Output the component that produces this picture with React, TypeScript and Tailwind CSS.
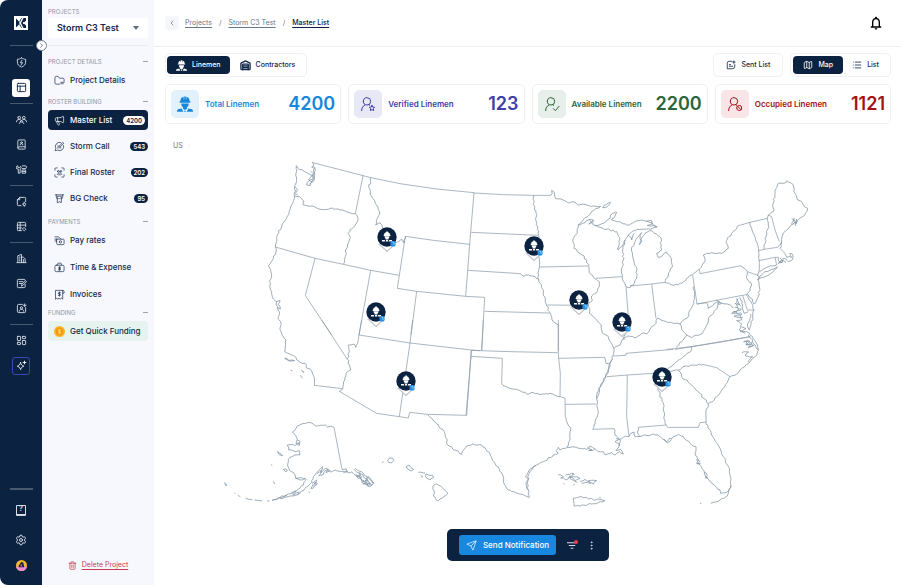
import type { ReactNode } from "react";
import {
  BookUser, ChevronLeft, ChevronRight, EllipsisVertical, LayoutDashboard, List, Map as MapIcon, Megaphone,
  PanelsTopLeft, Send, Settings, Trash2, Warehouse,
} from "lucide-react";
import { MdNotificationsNone } from "react-icons/md";

type IconProps = { className?: string; strokeWidth?: number };
type Icon = (props: IconProps) => ReactNode;

/* A 24-unit outline icon made from one path. */
function outline(d: string): Icon {
  return function Outline({ className, strokeWidth = 1.5 }: IconProps) {
    return (
      <svg viewBox="0 0 24 24" fill="none" stroke="currentColor" strokeWidth={strokeWidth} strokeLinecap="round" strokeLinejoin="round" className={className} aria-hidden="true">
        <path d={d} />
      </svg>
    );
  };
}

const ShieldBolt = outline("M12 2c3 2 5.500 3 9 3v6c0 5.500-3.500 9-9 11-5.500-2-9-5.500-9-11V5c3.500 0 6-1 9-3zM13 7l-3.500 5.500h5L11 17.500");
const Crew = outline("M4 8a3 3 0 1 0 6 0 3 3 0 1 0-6 0M14 8a3 3 0 1 0 6 0 3 3 0 1 0-6 0M1 17c0-3 2-5 6-5 2 0 4 1 5 2.500 1-1.500 3-2.500 5-2.500 4 0 6 2 6 5M9 17a3 2.500 0 1 1 6 0M7 21c0-2 2-3.500 5-3.500s5 1.500 5 3.500");
const Tools = outline("M3 4a3.500 3.500 0 0 0 2 7v9h4v-9a3.500 3.500 0 0 0 1-6L8 8H5zM14 4h6a2 2 0 0 1 0 6h-6M14 13h7v7h-7zM14 16.500h7");
const FileGear = outline("M11 21H5a2 2 0 0 1-2-2V8l5-5h11a2 2 0 0 1 2 2v7M8 3v5H3M15 18a3 3 0 1 0 6 0 3 3 0 1 0-6 0M18 13.500v1.500M18 21v1.500");
const TableGear = outline("M12 21H5a2 2 0 0 1-2-2V5a2 2 0 0 1 2-2h14a2 2 0 0 1 2 2v7M3 9h18M3 15h9M9 3v18M18 14.500l3.500 3.500-3.500 3.500-3.500-3.500z");
const Building = outline("M2 21h20M4 21V6l8-3v18M12 9h4l4 4v8M7 9h2M7 13h2M7 17h2M16 14v7");
const NoteEdit = outline("M20 14v5a2 2 0 0 1-2 2H5a2 2 0 0 1-2-2V5a2 2 0 0 1 2-2h13a2 2 0 0 1 2 2M7 8h8M7 12h5M12 17l1-4 8-7 2 2-8 8z");
const ProfilePlus = outline("M14 3H6a3 3 0 0 0-3 3v12a3 3 0 0 0 3 3h12a3 3 0 0 0 3-3v-8M19 2v6M16 5h6M9.500 10.500a2.500 2.500 0 1 0 5 0 2.500 2.500 0 1 0-5 0M7 18c0-3 2-4 5-4s5 1 5 4");
const Spark = outline("M10 6c1 4 3 6 7 7.500-4 1.500-6 3.500-7 7.500-1-4-3-6-7-7.500C7 12 9 10 10 6zM18.500 2.500v6M15.500 5.500h6");
const FolderCheck = outline("M12 20H5a3 3 0 0 1-3-3V6a3 3 0 0 1 3-3h4l3 4h7a3 3 0 0 1 3 3v4M15 16h7M15 19h5");
const ChatEdit = outline("M15 3.500A9 9 0 0 0 4 16l-1.500 5L8 20a9 9 0 0 0 13-10M8 15h7M8 11h3M12 11l7-8 2.500 2-7 7z");
const ChatPlus = outline("M14 3H8a5 5 0 0 0-5 5v13h12a6 6 0 0 0 6-6v-4M19 2v6M16 5h6M8 11h3M8 15h8");
const ScanCrew = outline("M2 7V4a2 2 0 0 1 2-2h3M17 2h3a2 2 0 0 1 2 2v3M22 17v3a2 2 0 0 1-2 2h-3M7 22H4a2 2 0 0 1-2-2v-3M7.500 9.500a2 2 0 1 0 4 0 2 2 0 1 0-4 0M13 9.500a2 2 0 1 0 4 0 2 2 0 1 0-4 0M7 16c0-4 10-4 10 0M10 17h4");
const BadgeCheck = outline("M3 4h18M5 4v5a4 4 0 0 0 3 4M19 4v5a4 4 0 0 1-3 4M8 7h8v14l-4-2-4 2zM10.500 12l1.200 1.200 2-2.200");
const Pay = outline("M6 9h14a2 2 0 0 1 2 2v8a2 2 0 0 1-2 2H8a2 2 0 0 1-2-2zM2 4h8l5 5M2 9h5M2 13h4M11.500 15a2.500 2.500 0 1 0 5 0 2.500 2.500 0 1 0-5 0");
const ExpenseCase = outline("M5 7h14a3 3 0 0 1 3 3v8a3 3 0 0 1-3 3H5a3 3 0 0 1-3-3v-8a3 3 0 0 1 3-3zM8 7V4a1.500 1.500 0 0 1 1.500-1.500h5A1.500 1.500 0 0 1 16 4v3M14.500 11.500h-4v2.500h3.500v3H9.500M12 10v8.500");
const Invoice = outline("M4 3h15v19l-3-2-2.500 2-2.500-2-2.500 2L6 20l-2 2zM19 3a2.500 2.500 0 0 1 3 2.500V9h-3M14 8h-4v3h3.500v3H9.500M12 6.500v9");

function Coin({ className }: IconProps) {
  return (
    <svg viewBox="0 0 24 24" className={className} aria-hidden="true">
      <circle cx="12" cy="12" r="12" fill="#fcb527" />
      <circle cx="12" cy="12" r="8.500" fill="#f49a10" />
      <path d="M15 8.500h-5V12h4.500v3.500H9M12 6.500v11" fill="none" stroke="#fdd267" strokeWidth="2" />
    </svg>
  );
}

const hardHat = "M4 8h1c0-3.500 2-6 5-6.800V5h.8V.8h2.400V5h.8V1.200C17 2 19 4.500 19 8h1v2H4z";
const faceAndChest = "M6.500 11.200h11v1.300c0 2-1 3.600-2.500 4.500V19l-3 2-3-2v-2c-1.500-.9-2.500-2.500-2.500-4.500z";
const shoulders = "M0 23.500C0 21 1 20 3 19.600l4-.8 2.500 4.700zM24 23.500c0-2.500-1-3.500-3-3.900l-4-.8-2.500 4.700zM10.800 22h2.400v1.500h-2.400z";

function Lineman({ className }: IconProps) {
  return (
    <svg viewBox="0 0 24 24" fill="currentColor" className={className} aria-hidden="true">
      <path d={hardHat} />
      <path d={faceAndChest} />
      <path d={shoulders} />
    </svg>
  );
}

function Logo() {
  return (
    <svg viewBox="0 0 14 14" className="size-3.5" role="img" aria-label="Home">
      <path fill="#fff" d="M0 0h14v14H0z" />
      <path fill="#0b2240" d="M2 2.500 5 5.500v3l-3 3zM7.500 2H12v2.500L9.500 7 12 9.500V12H7.500L5.500 9V5z" />
      <path fill="#fff" d="M8 2h1.500L7 7l2.500 5H8L5.500 7z" />
      <circle cx="9.800" cy="7" r=".9" fill="#fff" />
    </svg>
  );
}

const railGroups: { label: string; icon: Icon; look?: "active" | "ai" }[][] = [
  [{ label: "Safety", icon: ShieldBolt }, { label: "Projects", icon: PanelsTopLeft, look: "active" }],
  [{ label: "Crews", icon: Crew }, { label: "Contacts", icon: BookUser }, { label: "Equipment", icon: Tools }],
  [{ label: "Files", icon: FileGear }, { label: "Tables", icon: TableGear }],
  [{ label: "Companies", icon: Building }, { label: "Notes", icon: NoteEdit }, { label: "Profiles", icon: ProfilePlus }],
  [{ label: "Dashboards", icon: LayoutDashboard }, { label: "Assistant", icon: Spark, look: "ai" }],
];

function Rail() {
  return (
    <nav aria-label="Main" className="relative flex w-[42px] shrink-0 flex-col items-center rounded-l-lg bg-[#0b2240] pt-4 text-[#d5dce6]">
      <Logo />
      <div className="mt-[15px] mb-1 h-px w-[23px] bg-[#48596f]" />
      {railGroups.map((group, i) => (
        <div key={i} className="flex flex-col items-center">
          {i > 0 && <div className="my-[3px] h-px w-[23px] bg-[#48596f]" />}
          {group.map(({ label, icon: Glyph, look }) => (
            <button key={label} aria-label={label} className="flex h-[25px] w-[42px] items-center justify-center">
              <span
                className={
                  look === "active"
                    ? "flex size-[18px] items-center justify-center rounded-[3px] bg-white text-[#0b2240]"
                    : look === "ai"
                      ? "flex size-[18px] items-center justify-center rounded-[3px] border border-[#3949b5] text-white"
                      : "flex size-[18px] items-center justify-center"
                }
              >
                <Glyph className="size-[11px]" strokeWidth={2} />
              </span>
            </button>
          ))}
        </div>
      ))}
      <div className="mt-auto mb-2 h-0.5 w-[23px] bg-[#48596f]" />
      <button aria-label="Help" className="flex h-6 items-center">
        <span className="flex h-[11px] w-[10px] items-center justify-center rounded-[1px] border border-b-2 border-current text-[7px] font-bold">?</span>
      </button>
      <button aria-label="Settings" className="flex h-9 items-center"><Settings className="size-3" /></button>
      <button aria-label="Account" className="mt-0.5 mb-3.5 flex size-[11px] items-center justify-center overflow-hidden rounded-full">
        <svg viewBox="0 0 12 12" className="size-full" aria-hidden="true">
          <path fill="#fbb42c" d="M0 0h12v12H0z" />
          <path fill="#f08bd6" d="M0 7h12v5H0z" />
          <path fill="#142647" d="M3 8V6l3-4 2 1 1 5z" />
          <path fill="#e97b50" d="M5 5h1.500v2H5z" />
        </svg>
      </button>
      <button aria-label="Expand menu" className="absolute top-10 -right-[5px] flex size-[11px] items-center justify-center rounded-full border border-[#6f7c8d] bg-white text-[#0b2240]">
        <ChevronRight className="size-[7px]" />
      </button>
    </nav>
  );
}

const menu: { title: string; spacing: string; gap: string; items: { label: string; icon: Icon; count?: string; look?: "active" | "funding" }[] }[] = [
  { title: "PROJECT DETAILS", spacing: "pt-[9px]", gap: "gap-1.5", items: [{ label: "Project Details", icon: FolderCheck }] },
  {
    title: "ROSTER BUILDING",
    spacing: "pt-[5px]",
    gap: "gap-1.5",
    items: [
      { label: "Master List", icon: Megaphone, count: "4200", look: "active" },
      { label: "Storm Call", icon: ChatEdit, count: "543" },
      { label: "Final Roster", icon: ScanCrew, count: "202" },
      { label: "BG Check", icon: BadgeCheck, count: "95" },
    ],
  },
  {
    title: "PAYMENTS",
    spacing: "pt-[7px]",
    gap: "gap-[7px]",
    items: [
      { label: "Pay rates", icon: Pay },
      { label: "Time & Expense", icon: ExpenseCase },
      { label: "Invoices", icon: Invoice },
    ],
  },
  { title: "FUNDING", spacing: "pt-0.5", gap: "gap-1.5", items: [{ label: "Get Quick Funding", icon: Coin, look: "funding" }] },
];

function ProjectPanel() {
  return (
    <aside className="flex w-28 shrink-0 flex-col bg-[#f7f8fd] px-1.5 pt-1.5 pb-3">
      <label htmlFor="project" className="block text-[6px] leading-3 text-[#8d96a3]">PROJECTS</label>
      <div className="relative flex">
        <select id="project" className="h-5 w-full appearance-none rounded-[4px] bg-white pl-[9px] text-[9px] font-semibold text-[#14294a]">
          <option>Storm C3 Test</option>
        </select>
        <svg viewBox="0 0 6 4" className="pointer-events-none absolute top-2 right-[9px] h-1 w-1.5" aria-hidden="true"><path fill="#5d7183" d="M0 0h6L3 4z" /></svg>
      </div>
      <div className="mt-[7px] h-px bg-[#e9ecf2]" />
      {menu.map(({ title, spacing, gap, items }) => (
        <section key={title} className={spacing}>
          <h2 className="flex h-3 items-center justify-between text-[6px] text-[#8d96a3]">
            {title}
            <span className="h-px w-[5px] bg-[#9aa3b0]" />
          </h2>
          <ul className={`mt-[3px] flex flex-col ${gap}`}>
            {items.map(({ label, icon: Glyph, count, look }) => (
              <li key={label}>
                <a
                  href="#"
                  className={
                    look === "active"
                      ? "flex h-5 items-center gap-[5px] rounded-[4px] bg-[#0b2240] pr-[3px] pl-1.5 text-[8px] font-medium text-white"
                      : look === "funding"
                        ? "flex h-5 items-center gap-[5px] rounded-[4px] bg-[#e6f3ef] pl-1.5 text-[8px] font-medium text-[#14294a]"
                        : "flex h-5 items-center gap-[5px] pl-1.5 text-[8px] font-medium text-[#14294a]"
                  }
                >
                  <Glyph className="size-[11px] shrink-0" strokeWidth={1.5} />
                  <span className="whitespace-nowrap">{label}</span>
                  {count && (
                    <span
                      className={
                        look === "active"
                          ? "ml-auto rounded-full bg-white px-[3px] text-[6px] leading-[9px] font-semibold text-[#0b2240]"
                          : "ml-auto rounded-full bg-[#0b2240] px-[3px] text-[6px] leading-[9px] font-semibold text-white"
                      }
                    >
                      {count}
                    </span>
                  )}
                </a>
              </li>
            ))}
          </ul>
        </section>
      ))}
      <button className="mt-auto flex items-center justify-center gap-[5px] text-[7px] leading-4 text-[#c9394f]">
        <Trash2 className="size-[9px]" />
        <span className="underline underline-offset-2">Delete Project</span>
      </button>
    </aside>
  );
}

const person = "M5 8a5.500 5.500 0 1 0 11 0 5.500 5.500 0 1 0-11 0M2.500 22c0-4 1.500-7 5-8.700M13 13.200l1.500.8";
const PersonStar = outline(`${person}M18 14l1.200 2.600 2.800.4-2 2 .5 2.800-2.500-1.300-2.500 1.300.5-2.800-2-2 2.800-.4z`);
const PersonCheck = outline(`${person}M14 19l3 3 5.500-6.500`);
const PersonBlocked = outline(`${person}M14.500 18a3.800 3.800 0 1 0 7.600 0 3.800 3.800 0 1 0-7.600 0M16 15.500l5 5`);

const stats: { label: string; value: string; text: string; tile: string; icon: Icon }[] = [
  { label: "Total Linemen", value: "4200", text: "text-[#1787dc]", tile: "bg-[#e3f1fd]", icon: Lineman },
  { label: "Verified Linemen", value: "123", text: "text-[#403ea8]", tile: "bg-[#e8e8f7]", icon: PersonStar },
  { label: "Available Linemen", value: "2200", text: "text-[#2a6638]", tile: "bg-[#e7efea]", icon: PersonCheck },
  { label: "Occupied Linemen", value: "1121", text: "text-[#a31217]", tile: "bg-[#f8e5e7]", icon: PersonBlocked },
];

/* Each sheet holds lines in thirds of a map unit, from its own corner.
   "straight" are surveyed borders, "natural" are coasts and rivers. */
const sheets = [
  {
    x: 260, y: 155,
    straight: [
      "163 24 309 62 333 68 420 86 530 102 642 113 629 268 617 424", "46 276 165 310 250 328 332 346 418 361",
      "309 62 286 176", "165 310 136 422 215 540", "332 346 297 540", "436 244 412 400 470 409 617 424", "436 244 520 256 629 268", "470 409 453 540",
    ],
    natural: [
      "109 32 118 44 130 48 142 54 157 60 160 72 150 92 140 90 148 76 158 72 164 60 160 48 163 40 155 36 162 30 157 22 163 24",
      "152 48 160 56 153 66 146 72 156 80 148 88", "160 34 166 46 160 62 164 72 156 82",
      "109 32 107 60 110 80 104 95 107 108 103 122 95 150 80 190 65 215 52 240 50 260 46 276",
      "105 95 112 104 105 116 113 120", "103 122 118 124 130 136 130 150 145 154 165 156 180 163 210 160 240 165 262 171 286 176 294 190 285 212 264 236 271 248 262 270 250 328",
      "46 276 48 290 40 310 25 332 35 360 28 380 35 410 40 432 50 440 48 450 58 470 54 490 62 500 60 520 66 540",
      "50 440 60 436 54 448 61 462 52 458", "333 68 327 98 335 125 346 145 359 170 352 190 347 210 360 204 368 218 380 245 400 262 415 260 425 252 432 264 436 244",
    ],
  },
  {
    x: 460, y: 170,
    straight: [
      "42 69 130 74 222 76 273 76", "34 187 235 196", "24 301 182 311", "74 424 268 429", "17 379 74 382 65 542", "262 405 385 406",
      "239 291 384 288", "408 325 486 320", "510 348 575 342 615 337", "498 350 504 430", "575 342 588 445", "295 462 295 542",
    ],
    natural: [
      "273 76 275 61 283 67 287 86 310 90 322 97 345 96 355 105 375 103 395 110 422 109 400 122 375 143 355 164",
      "222 76 221 100 228 130 230 160 236 196 238 210 236 240 239 290 234 310 236 328 245 345 250 370 258 400 268 425 275 440 280 455 294 464",
      "182 311 192 319 205 315 225 320 236 328", "355 164 352 190 340 205 342 235 360 250 380 270 386 290 388 308 400 322 418 335 418 350 410 368 395 378 397 390 385 405 388 430 410 450 424 465 428 490 445 500 455 520 462 535",
      "355 164 375 158 390 148 400 150 398 163 404 166 430 160 450 145 458 130 470 127 465 140 455 150 475 155 500 165 520 158 545 150 560 155 575 152 580 165 590 172 570 178 545 178 520 182 505 195 495 210 488 240 490 270 484 300 488 330 498 350 510 353 520 345 530 320 528 290 518 260 514 240 525 215 535 200 545 188",
      "388 150 396 158 386 162 400 152", "404 166 440 178 470 185 480 205 478 220 474 240 485 230 495 210", "560 150 578 160 562 166 592 170", "505 195 515 210 522 190",
      "545 188 540 205 545 215 538 224 544 205 555 190 575 182 600 200 604 225 605 240 590 250 595 262 608 255 620 246 632 262 638 290 625 315 615 335",
      "428 113 440 103 452 98 445 107 432 113 428 113", "504 430 500 470 492 510",
      "462 535 480 525 490 505 505 498 530 502 545 490 560 492 575 470 588 460 592 445",
    ],
  },
  {
    x: 640, y: 170,
    straight: [
      "158 316 171 402 318 374", "178 298 180 311 303 287", "322 305 354 316", "358 270 358 300 352 318", "292 168 330 157 382 145",
      "385 135 395 140 405 180 418 215", "356 242 372 238 412 232", "356 272 405 262 415 262", "405 262 410 285", "308 376 322 420 342 420",
      "171 402 202 398", "105 538 155 530 250 515 330 500",
    ],
    natural: [
      "52 445 70 452 85 458 105 460 120 462 130 450 145 440 150 420 162 400 163 378 160 350",
      "75 337 100 346 125 340 140 325 158 314 178 298 195 275 190 255 215 247 245 250 265 235 258 215 275 190 292 168",
      "382 145 385 135 400 125 400 100 405 70 415 40 430 40 440 32 458 42 465 70 472 90 485 95 490 105 503 115 495 135 475 150 468 162 462 145 455 165 440 180 428 195 425 215 412 232",
      "455 145 464 158 458 164 470 148 466 168", "303 287 322 305 320 325 335 345 330 362 318 374", "330 157 340 190 352 220 356 242 358 270", "382 145 385 165 378 200 372 238",
      "425 215 420 235 430 245 440 262 455 262 450 250 457 252 458 268 445 275 430 265 425 278 415 272 415 262", "420 264 428 276 414 280 424 270 438 278",
      "358 306 380 292 410 285", "352 330 370 310 395 298 412 290 400 305 375 320 352 330", "354 316 358 350 355 380 342 402 338 388 322 372",
      "318 374 335 400 342 420 338 445 328 480 322 465 330 445 332 432", "290 385 298 405 285 400 295 420 275 430 300 435 305 450 290 452 305 462 298 480 320 485 328 490 345 512 355 540",
      "300 382 308 405 312 430 325 425", "284 412 304 418 280 426 306 432 282 438 308 442", "294 386 290 398 302 408", "202 400 205 415 222 402 235 395 255 402 270 405 280 415", "228 390 245 400 232 402",
      "235 395 232 415 215 435 205 450 198 470 188 490 155 503 140 495 125 478 120 462", "140 495 125 515 108 532", "310 515 325 512 318 524 336 518 326 530 342 526", "304 470 318 476 300 484 316 490",
    ],
  },
  {
    x: 260, y: 320,
    straight: [
      "185 0 262 118", "297 45 450 69 634 90 660 92", "458 0 450 69 418 290", "305 0 297 45 293 70", "163 196 248 206", "238 214 350 280 418 290 445 294 449 277 502 283 620 286 634 90", "222 322 246 448",
    ],
    natural: [
      "66 45 70 50 78 60 74 95 95 105 108 112 118 125 135 130 138 142 155 152 162 170 163 196",
      "262 118 268 135 272 150 258 160 255 180 248 206 238 214", "262 118 268 95 265 75 282 72 288 82 293 70", "502 283 520 302 553 335 563 375 605 403",
      "74 115 85 120 104 122 88 123 74 115", "92 150 97 153", "124 150 132 158 127 152", "121 166 127 175",
      "222 322 190 316 170 318 150 308 125 312 108 325 97 336 112 358 108 370 120 368 118 376 100 374 82 375 86 390 108 395 120 393 120 405 105 405 90 412 85 425 84 440 95 455 105 465 108 475 125 473 138 478 130 495 110 512 85 522 60 532 36 542",
      "62 536 85 530 112 524 135 505 155 488 160 470 175 452 188 440 184 458 200 444 212 456 225 450 246 454 262 455 280 460 300 472 330 500 340 492 335 480 310 460 285 445",
      "105 474 120 480 136 474", "112 360 120 364 112 372", "170 462 184 452 176 468 190 464 196 452 206 448 198 458 212 452", "92 520 108 514 98 526 118 516 112 526",
      "282 448 300 466 290 468 312 484 304 486 326 500 316 480 334 496 320 472 342 488", "286 462 304 474 298 458 322 478 310 492 330 490", "246 448 258 446 262 456 250 458",
      "156 490 170 480 172 492 160 504 153 506 158 494", "158 498 166 486 168 496", "52 395 60 400 68 407 58 404 52 395", "70 448 82 450 78 456 70 448", "33 434 37 437", "40 484 44 492", "146 516 150 519",
      "366 429 371 425", "383 422 388 414 398 415 401 422 394 429 386 427 383 422", "438 440 447 435 453 443 461 448 453 453 443 447 438 440",
      "475 457 495 459", "482 466 488 470 484 472", "498 462 508 466 518 466 521 473 510 480 500 474 498 462", "519 498 530 492 548 504 564 520 548 534 532 543 520 528 522 512 519 498",
    ],
  },
  {
    x: 215, y: 410,
    straight: ["58 248 62 252", "68 256 76 260", "156 273 164 273"],
    natural: ["27 218 34 228 30 222", "92 264 100 268 112 269", "118 270 128 271 141 273", "172 270 186 268 200 262", "196 266 208 258 216 256"],
  },
  {
    x: 460, y: 320,
    straight: [
      "34 91 150 95 293 98", "34 91 33 109 127 115 125 191", "33 109 18 286", "70 0 65 92", "295 0 295 98 296 115 434 112", "296 115 301 160 300 230 315 234 316 290",
      "316 253 408 252", "398 328 462 326", "460 108 498 106 498 100 640 88", "440 170 502 165 580 160 620 157", "502 165 500 290 507 348", "535 322 618 315",
    ],
    natural: [
      "125 191 150 205 180 212 200 222 220 218 240 224 270 220 285 226 300 230", "316 290 332 330 330 360 322 382", "434 112 438 130 450 130",
      "462 85 460 105 450 130 440 165 425 190 410 225 412 250 415 280 405 305 398 328", "456 118 446 140 434 178 420 200 411 236",
      "462 326 465 345 478 358 490 352 507 350 512 340 522 336 525 350 540 350 532 336 535 322", "592 200 600 225 612 260 612 290 618 315", "540 350 580 342 600 350 620 365 640 350 655 343",
      "322 382 350 382 380 388 390 378 402 385 415 395 430 395 435 405 455 398 465 405 478 395 490 402 482 388 468 392 478 372 465 365 478 358", "382 380 396 390 386 392 404 388", "468 356 482 362 478 378",
      "322 382 300 390 295 382 288 392 295 400 280 405 250 425 220 440 205 465 202 490 208 532 180 522 145 510 130 485 128 465 105 430 90 400 65 375 38 372 20 378 5 403", "228 436 212 446 204 458 196 470 206 476 198 490 205 510",
      "342 558 340 535 360 530 380 532 400 540 420 538 435 542 415 548 395 552 375 556 342 558", "418 532 423 534", "295 464 310 470 302 474 318 480 330 468 345 482 360 475 350 470 326 472", "316 466 340 460 330 476 352 488",
      "360 484 375 478 392 490 385 482 410 482 400 492 382 488 364 490", "310 489 314 493", "340 496 344 492", "338 461 344 464",
    ],
  },
  {
    x: 620, y: 320,
    straight: ["140 88 155 87 215 80 390 50", "138 315 143 322 235 322 240 308 258 306", "248 133 290 143 330 170"],
    natural: [
      "215 80 212 95 190 110 165 130 148 142 140 152", "140 156 177 150 200 138 248 133", "385 45 405 75 415 90 410 105 395 118 385 130 360 150 350 162 330 170 315 200 290 230 265 252 258 275 258 306",
      "372 66 390 64 378 74 400 76 384 84", "366 98 386 96 376 108 398 110 384 126", "175 152 185 170 215 195 235 215 265 252",
      "258 306 275 345 300 385 305 400 325 440 333 480 330 505 318 518 302 520 300 510 275 490 255 465 245 440 230 430 235 420 225 405 228 380 210 370 190 350 175 343",
      "332 496 322 528 300 540 272 550", "228 418 240 424 232 432 242 430", "252 456 262 466 256 474 264 472", "132 358 142 368 155 358", "240 550 244 550",
    ],
  },
];

/* Turns a point list into a path, adding a repeatable shiver when the line is natural. */
function trace(list: string, rough: boolean) {
  const n = list.split(" ").map(Number);
  let seed = Math.abs(n[0] * 31 + n[1] * 17) + 7;
  const shake = () => {
    seed = (seed * 16807) % 2147483647;
    return ((seed % 1000) / 1000 - 0.5) * 5;
  };
  let d = `M${n[0]} ${n[1]}`;
  for (let i = 2; i < n.length; i += 2) {
    const dx = n[i] - n[i - 2];
    const dy = n[i + 1] - n[i - 1];
    const steps = rough ? Math.floor(Math.hypot(dx, dy) / 6) : 0;
    for (let s = 1; s < steps; s++) {
      d += `L${(n[i - 2] + (dx * s) / steps + shake()).toFixed(1)} ${(n[i - 1] + (dy * s) / steps + shake()).toFixed(1)}`;
    }
    d += `L${n[i]} ${n[i + 1]}`;
  }
  return d;
}

const pins = [[387, 237], [534, 246], [376, 312], [579, 300], [622, 322], [662, 377], [406, 381]];

function UsMap() {
  return (
    <svg viewBox="165 155 726 360" className="block w-full" role="img" aria-label="Linemen across the United States">
      <g fill="none" stroke="#8b9cab" strokeWidth="2.200" strokeLinejoin="round">
        {sheets.map((sheet) => (
          <g key={`${sheet.x}-${sheet.y}`} transform={`translate(${sheet.x} ${sheet.y}) scale(${1 / 3})`}>
            {sheet.straight.map((line) => <path key={line} d={trace(line, false)} />)}
            {sheet.natural.map((line) => <path key={line} d={trace(line, true)} stroke="#7b90a0" />)}
          </g>
        ))}
      </g>
      {pins.map(([x, y]) => (
        <g key={x} transform={`translate(${x} ${y})`}>
          <path d="M-8 7 0 14.500 8 7z" fill="#fff" stroke="#c4c7cb" strokeWidth="1.200" strokeLinejoin="round" />
          <circle r="9.700" fill="#0b2240" />
          <g transform="translate(-5 -5.500) scale(.42)" fill="#fff">
            <path d="M4 8h1c0-4 2.500-6 5-6.500V0h4v1.500C16.500 2 19 4 19 8h1v2.500H4z" />
            <path d="M6 11.500h12c0 2.500-1 4-2.500 5V19h-7v-2.500C7 15.500 6 14 6 11.500z" />
            <path d="M0 24v-3.500h6.500L8 24zM24 24v-3.500h-6.500L16 24zM9.500 20.500h5V24h-5z" />
          </g>
          <rect x="3.500" y="4" width="5" height="5.500" rx="1.500" fill="#2490e8" />
          <path d="M5.500 5.500h1.500v2.500" stroke="#b9defb" strokeWidth=".7" fill="none" />
        </g>
      ))}
    </svg>
  );
}

function Main() {
  return (
    <main className="flex min-w-0 flex-1 flex-col">
      <header className="flex h-[47px] items-center border-b border-[#eceef1] pr-[17px] pl-[11px]">
        <button aria-label="Back" className="flex size-3.5 items-center justify-center rounded-[3px] bg-[#f5f6fc] text-[#5c6b7d]">
          <ChevronLeft className="size-2" />
        </button>
        <nav aria-label="Breadcrumb" className="ml-1.5 flex items-center gap-[7px] text-[7px] text-[#66788a]">
          <a href="#" className="underline underline-offset-2">Projects</a>
          <span>/</span>
          <a href="#" className="underline underline-offset-2">Storm C3 Test</a>
          <span>/</span>
          <a href="#" aria-current="page" className="font-medium text-[#0b2240] underline underline-offset-2">Master List</a>
        </nav>
        <button aria-label="Alerts" className="ml-auto"><MdNotificationsNone className="size-4 text-black" /></button>
      </header>
      <div className="flex flex-1 flex-col px-[11px] pt-1.5 pr-2.5 pb-6">
        <div className="flex items-center gap-[7px] text-[7px] font-medium text-[#14294a]">
          <div className="mr-auto flex rounded-[5px] border border-[#f0f1f4] px-px py-0.5">
            <button className="flex h-[18px] items-center gap-[5px] rounded-[4px] bg-[#0b2240] px-[9px] text-white"><Lineman className="size-[11px]" />Linemen</button>
            <button className="flex h-[18px] items-center gap-[5px] px-2.5"><Warehouse className="size-[11px]" strokeWidth={3} />Contractors</button>
          </div>
          <button className="flex h-6 items-center gap-[5px] rounded-[5px] border border-[#f0f1f4] px-3"><ChatPlus className="size-2.5" strokeWidth={2} />Sent List</button>
          <div className="flex rounded-[5px] border border-[#f0f1f4] p-0.5">
            <button className="flex h-[18px] items-center gap-[5px] rounded-[4px] bg-[#0b2240] px-2.5 text-white"><MapIcon className="size-2.5" />Map</button>
            <button className="flex h-[18px] items-center gap-[5px] px-[9px]"><List className="size-2.5" />List</button>
          </div>
        </div>
        <div className="mt-[7px] grid grid-cols-4 gap-[7px]">
          {stats.map(({ label, value, text, tile, icon: Glyph }) => (
            <section key={label} className={`flex h-10 items-center rounded-[5px] border border-[#f0f1f4] px-[5px] ${text}`}>
              <span className={`flex size-7 shrink-0 items-center justify-center rounded-[5px] ${tile}`}>
                <Glyph className="size-4" strokeWidth={1.5} />
              </span>
              <h2 className="ml-1.5 text-[8px] font-semibold whitespace-nowrap">{label}</h2>
              <p className="ml-auto text-[18px] leading-6 font-semibold">{value}</p>
            </section>
          ))}
        </div>
        <nav aria-label="Map region" className="mt-4 flex h-3 items-center gap-[3px] pl-2 text-[7px] text-[#66788a]">
          <a href="#">US</a>
          <ChevronRight className="size-1.5 text-[#d5dae0]" />
        </nav>
        <div className="mt-[3px]"><UsMap /></div>
        <div className="mx-auto mt-auto flex h-8 items-center rounded-[5px] bg-[#0b2240] px-3 text-[#d5dce6]">
          <button className="flex h-5 items-center gap-1.5 rounded-[3px] bg-[#1787e0] px-[7px] text-[8px] font-medium text-white"><Send className="size-[11px]" strokeWidth={1.5} />Send Notification</button>
          <button aria-label="Filter" className="relative ml-[11px]">
            <svg viewBox="0 0 12 12" className="size-[11px]" stroke="currentColor" strokeWidth="1.300" aria-hidden="true"><path d="M0 3h11M2 6h7M4 9h3" /></svg>
            <span className="absolute top-0 right-0 size-1 rounded-full bg-[#ef3b4c]" />
          </button>
          <button aria-label="More" className="ml-2"><EllipsisVertical className="size-[11px]" /></button>
        </div>
      </div>
    </main>
  );
}

export default function App() {
  return (
    <div className="flex min-h-screen bg-white font-['Inter',sans-serif]">
      <Rail />
      <ProjectPanel />
      <Main />
    </div>
  );
}
